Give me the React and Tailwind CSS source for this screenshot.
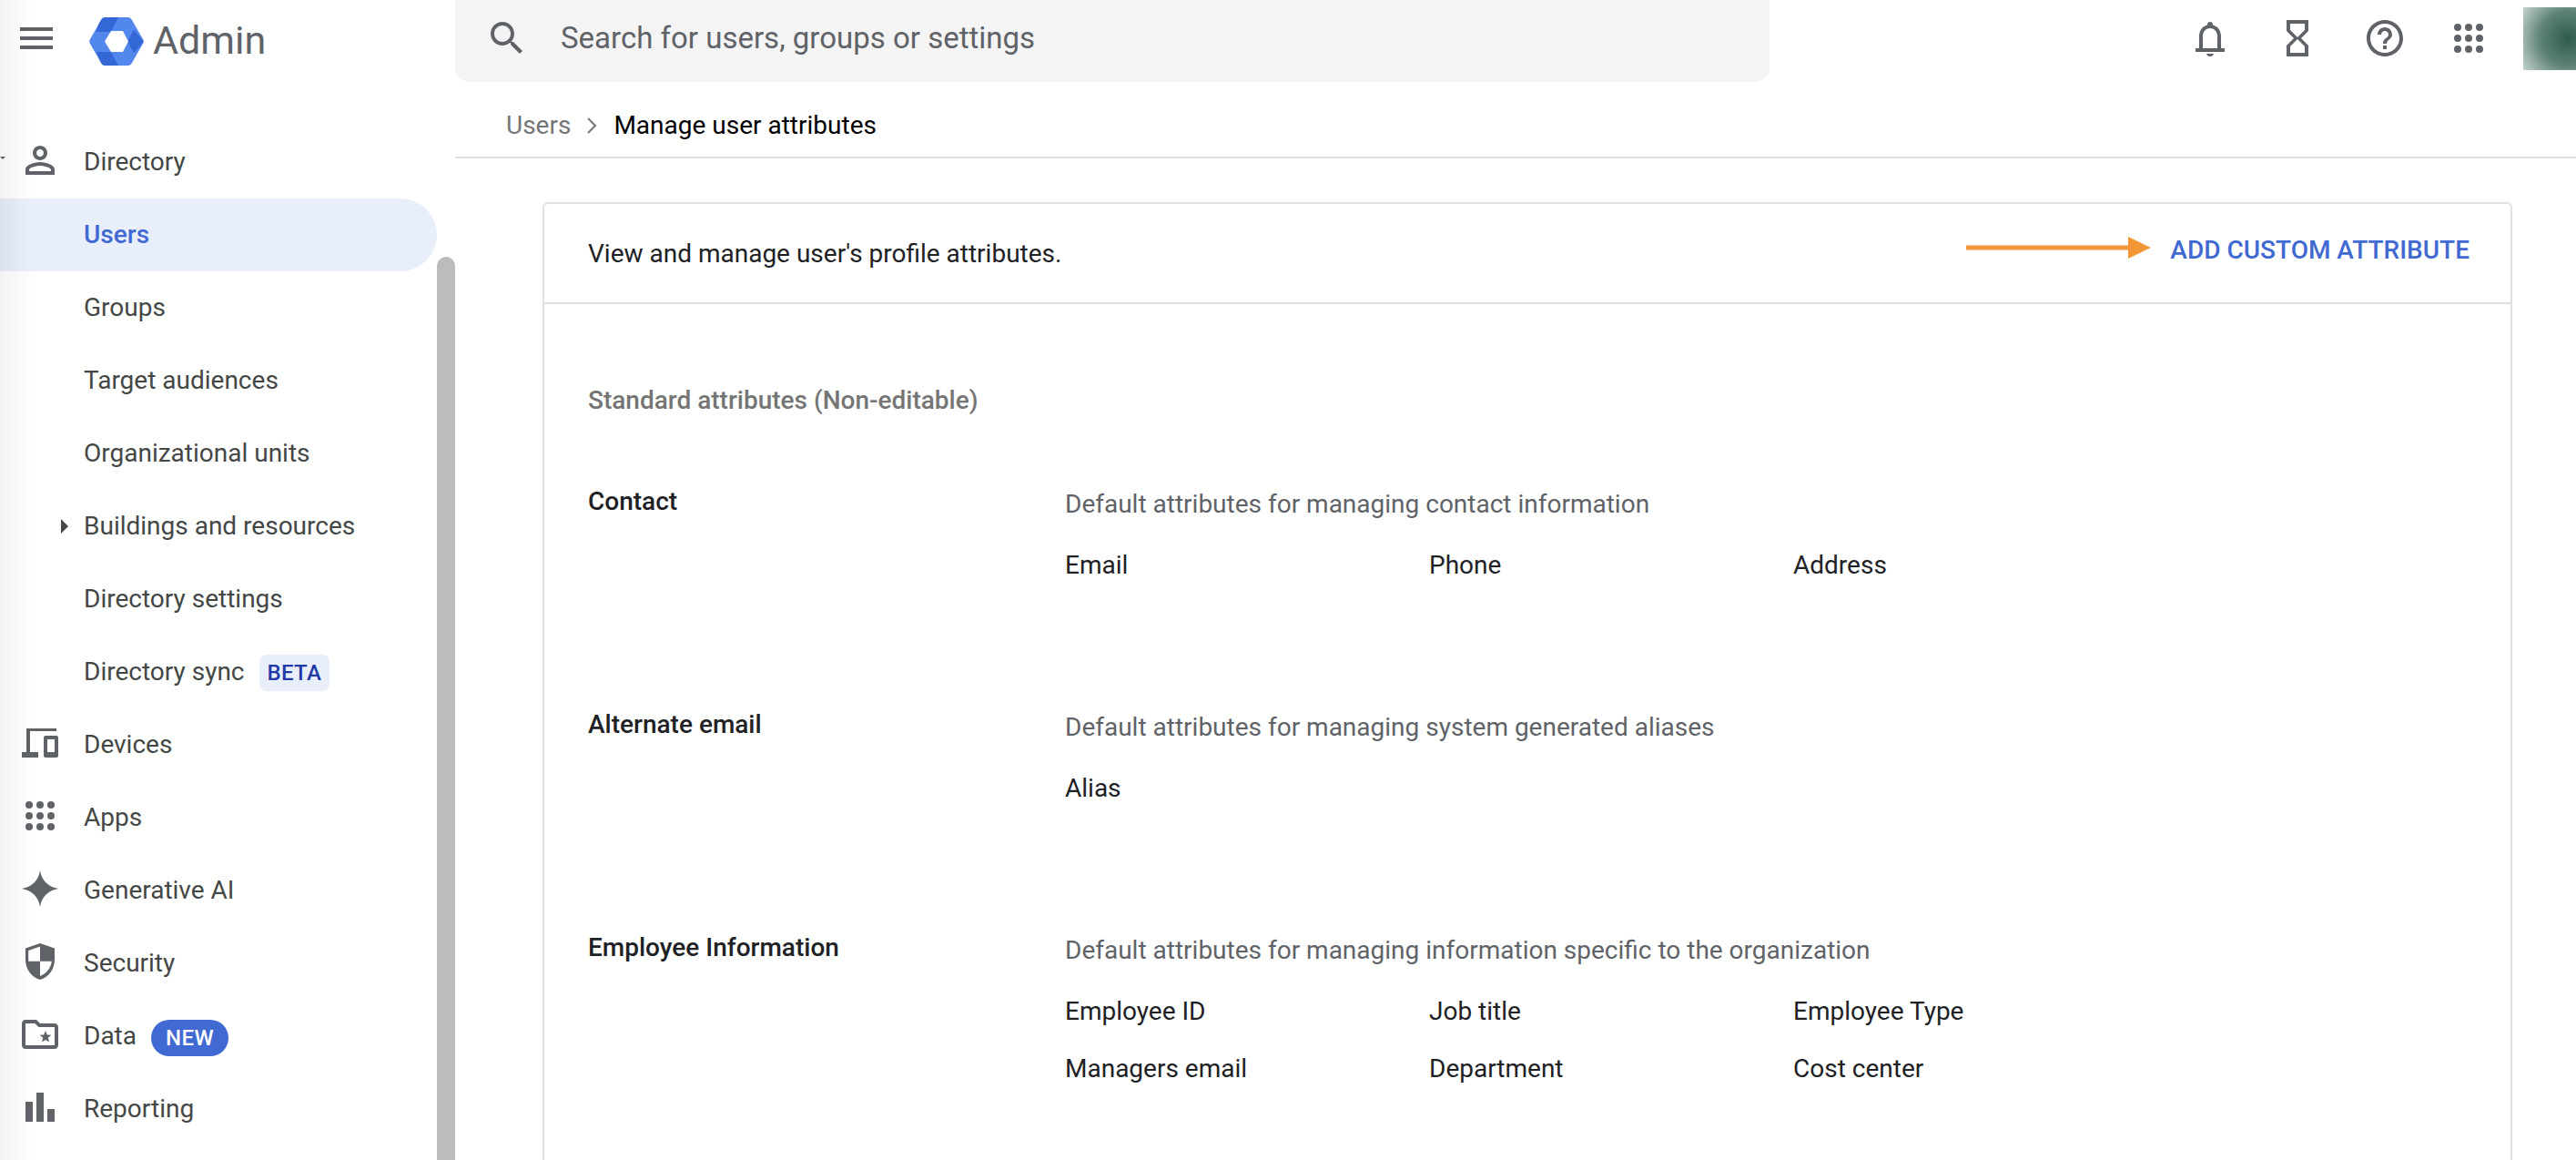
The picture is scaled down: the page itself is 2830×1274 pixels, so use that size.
/**
 * admin console - manage user attributes
 */

import React from 'react';

const Icon = ({ d, className = '', evenOdd }) => (
    <svg viewBox="0 0 24 24" className={`w-[48px] h-[48px] shrink-0 fill-[#5f6368] ${className}`}>
        <path d={d} fillRule={evenOdd ? 'evenodd' : undefined} />
    </svg>
);

const AppsIcon = ({ className = '' }) => (
    <svg viewBox="0 0 24 24" className={`w-[48px] h-[48px] shrink-0 fill-[#5f6368] ${className}`}>
        {[6, 12, 18].map((y) =>
            [6, 12, 18].map((x) => <circle key={`${x}-${y}`} cx={x} cy={y} r="2" />)
        )}
    </svg>
);

const ShieldIcon = () => (
    <svg viewBox="0 0 24 24" className="w-[48px] h-[48px] shrink-0 -mt-[4px]">
        <path className="fill-[#5f6368]" d="M12 2 4 4.8v6.3c0 5 3.4 9.7 8 10.9 4.6-1.2 8-5.9 8-10.9V4.8L12 2z" />
        <path className="fill-white" d="M5.6 11.9V6l6.4-2.2v8.1zM12 11.9h6.4c-.4 3.7-3 6.9-6.4 8.1z" />
    </svg>
);

const FolderIcon = () => (
    <svg viewBox="0 0 24 24" className="w-[48px] h-[48px] shrink-0 -mt-[4px] fill-[#5f6368]">
        <path d="M20 6h-8l-2-2H4c-1.1 0-2 .9-2 2v12c0 1.1.9 2 2 2h16c1.1 0 2-.9 2-2V8c0-1.1-.9-2-2-2zm0 12H4V6h5.2l2 2H20v10z" />
        <path d="m15 10 .9 2.2 2.3.2-1.8 1.5.6 2.3-2-1.2-2 1.2.6-2.3-1.8-1.5 2.3-.2z" />
    </svg>
);

const Logo = () => (
    <svg viewBox="0 0 60 53" className="w-[60px] h-[53px] shrink-0 mt-[7px]">
        <defs>
            <clipPath id="hex">
                <path d="M1 24 13 3c1-2 2.500-3 5-3h24c2.500 0 4 1 5 3l12 21c1 1.800 1 3.200 0 5L47 50c-1 2-2.500 3-5 3H18c-2.500 0-4-1-5-3L1 29c-1-1.800-1-3.200 0-5z" />
            </clipPath>
        </defs>
        <g clipPath="url(#hex)">
            <rect width="60" height="53" fill="#5287ee" />
            <polygon points="8,16 24,16 32,0 12,0" fill="#3367d6" />
            <polygon points="42,26.500 49,14 60,26.500 49,39" fill="#3367d6" />
            <polygon points="8,38 24,38 32,53 14,53" fill="#3367d6" />
            <polygon points="17,26.500 24,15 37,15 43,26.500 37,38 24,38" fill="#ffffff" />
        </g>
    </svg>
);

const paths = {
    menu: 'M3 18h18v-2H3v2zm0-5h18v-2H3v2zm0-7v2h18V6H3z',
    search: 'M15.5 14h-.79l-.28-.27C15.41 12.59 16 11.11 16 9.5 16 5.91 13.09 3 9.5 3S3 5.91 3 9.5 5.91 16 9.5 16c1.61 0 3.09-.59 4.23-1.57l.27.28v.79l5 4.99L20.49 19l-4.99-5zm-6 0C7.01 14 5 11.99 5 9.5S7.01 5 9.5 5 14 7.01 14 9.5 11.99 14 9.5 14z',
    bell: 'M12 22c1 0 1.800-.6 2-1.500h-4c.2.9 1 1.500 2 1.500zM20 17.500h-2V11c0-3-1.600-5.500-4.500-6.200V4.500a1.500 1.500 0 0 0-3 0v.3C7.600 5.500 6 8 6 11v6.500H4v2h16v-2zm-4 0H8V11c0-2.500 1.500-4.500 4-4.500s4 2 4 4.500v6.500z',
    hourglass: 'M6 2v6h.01L6 8.010 10 12l-4 4 .01.010H6V22h12v-5.990h-.01L18 16l-4-4 4-3.990-.01-.010H18V2H6zm10 14.500V20H8v-3.500l4-4 4 4zm-4-5l-4-4V4h8v3.500l-4 4z',
    help: 'M11 18h2v-2h-2v2zm1-16C6.480 2 2 6.480 2 12s4.480 10 10 10 10-4.480 10-10S17.520 2 12 2zm0 18c-4.410 0-8-3.590-8-8s3.590-8 8-8 8 3.590 8 8-3.590 8-8 8zm0-14c-2.210 0-4 1.790-4 4h2c0-1.100.9-2 2-2s2 .9 2 2c0 2-3 1.750-3 5h2c0-2.250 3-2.500 3-5 0-2.210-1.790-4-4-4z',
    person: 'M12 6c1.100 0 2 .9 2 2s-.9 2-2 2-2-.9-2-2 .9-2 2-2m0 9c2.700 0 5.800 1.290 6 2v1H6v-.99c.2-.72 3.300-2.010 6-2.010m0-11C9.790 4 8 5.790 8 8s1.790 4 4 4 4-1.790 4-4-1.790-4-4-4zm0 9c-2.670 0-8 1.340-8 4v3h16v-3c0-2.660-5.330-4-8-4z',
    devices: 'M4.500 4H21v1.500H6.500V17H11v3H2v-3h2.500zM15 8h6a1 1 0 0 1 1 1v10a1 1 0 0 1-1 1h-6a1 1 0 0 1-1-1V9a1 1 0 0 1 1-1zm1 2v7h4v-7z',
    spark: 'M12 2c.8 5.400 4.600 9.200 10 10-5.400.8-9.200 4.600-10 10-.8-5.400-4.600-9.200-10-10 5.400-.8 9.200-4.600 10-10z',
    bars: 'M4 9h4v11H4zM10 4h4v16h-4zM16 13h4v7h-4z',
};

const sidebarItems = [
    { label: 'Directory', icon: <Icon d={paths.person} className="-mt-[4px]" />, tip: true },
    { label: 'Users', active: true },
    { label: 'Groups' },
    { label: 'Target audiences' },
    { label: 'Organizational units' },
    { label: 'Buildings and resources', caret: true },
    { label: 'Directory settings' },
    { label: 'Directory sync', beta: true },
    { label: 'Devices', icon: <Icon d={paths.devices} className="-mt-[4px]" evenOdd /> },
    { label: 'Apps', icon: <AppsIcon className="-mt-[4px]" /> },
    { label: 'Generative AI', icon: <Icon d={paths.spark} className="-mt-[4px]" /> },
    { label: 'Security', icon: <ShieldIcon /> },
    { label: 'Data', icon: <FolderIcon />, isNew: true },
    { label: 'Reporting', icon: <Icon d={paths.bars} className="-mt-[4px]" /> },
];

const SidebarRow = ({ item }) => (
    <div
        className={`relative flex items-center h-[80px] shrink-0 ${
            item.active ? 'bg-[#e8effb] rounded-r-[40px] text-[#4169d2] font-medium' : 'text-[#444746]'
        }`}
    >
        {item.tip && (
            <div className="absolute left-0 top-[34px] w-0 h-0 border-x-[3px] border-x-transparent border-t-[3px] border-t-[#5f6368]" />
        )}
        <div className="w-[92px] shrink-0 flex justify-end items-center pr-[24px]">
            {item.icon}
            {item.caret && (
                <div className="-mr-[7px] w-0 h-0 border-y-[8px] border-y-transparent border-l-[8px] border-l-[#444746]" />
            )}
        </div>
        <span>{item.label}</span>
        {item.beta && (
            <span className="ml-[16px] mt-[2px] h-[40px] px-[9px] rounded-[8px] bg-[#e8effb] text-[#2239a8] text-[24px] font-medium tracking-[0.3px] flex items-center">
                BETA
            </span>
        )}
        {item.isNew && (
            <span className="ml-[16px] mt-[3px] h-[40px] px-[16px] rounded-full bg-[#4169d2] text-white text-[24px] font-medium tracking-[0.5px] flex items-center">
                NEW
            </span>
        )}
    </div>
);

const sections = [
    {
        title: 'Contact',
        desc: 'Default attributes for managing contact information',
        values: ['Email', 'Phone', 'Address'],
    },
    {
        title: 'Alternate email',
        desc: 'Default attributes for managing system generated aliases',
        values: ['Alias'],
    },
    {
        title: 'Employee Information',
        desc: 'Default attributes for managing information specific to the organization',
        values: ['Employee ID', 'Job title', 'Employee Type', 'Managers email', 'Department', 'Cost center'],
    },
];

export default function App() {
    return (
        <div className="relative w-[2830px] h-[1274px] overflow-hidden bg-white text-[28px] flex flex-col font-['Roboto',sans-serif]">
            {/* left edge shadow */}
            <div className="absolute left-0 top-0 bottom-0 w-[36px] z-10 bg-gradient-to-r from-black/5 to-transparent pointer-events-none" />

            {/* top bar */}
            <header className="h-[90px] shrink-0 flex">
                <div className="w-[500px] shrink-0 flex items-center pl-[16px] pb-[6px]">
                    <Icon d={paths.menu} />
                    <div className="ml-[34px] flex items-center">
                        <Logo />
                        <span className="ml-[10px] text-[43px] text-[#5f6368] mt-[4px]">Admin</span>
                    </div>
                </div>
                <div className="w-[1444px] shrink-0 bg-[#f4f4f4] rounded-b-[16px] flex items-center pl-[33px] pb-[6px]">
                    <Icon d={paths.search} />
                    <span className="ml-[35px] text-[33px] text-[#5f6368]">Search for users, groups or settings</span>
                </div>
                <div className="flex-1 flex justify-end">
                    <div className="flex items-center pb-[6px]">
                        <Icon d={paths.bell} />
                        <Icon d={paths.hourglass} className="ml-[48px]" />
                        <Icon d={paths.help} className="ml-[48px]" />
                        <AppsIcon className="ml-[44px]" />
                    </div>
                    <div className="ml-[36px] mt-[8px] w-[58px] h-[69px] bg-[radial-gradient(circle_at_85%_50%,#2f5b4f_0%,#5d8176_50%,#c5d3ce_100%)]" />
                </div>
            </header>

            <div className="flex-1 flex min-h-0">
                {/* sidebar */}
                <aside className="w-[500px] shrink-0 flex">
                    <nav className="w-[480px] shrink-0 pt-[48px] flex flex-col">
                        {sidebarItems.map((item) => (
                            <SidebarRow key={item.label} item={item} />
                        ))}
                    </nav>
                    <div className="w-[20px] mt-[192px] rounded-t-[10px] bg-[#bcbcbc]" />
                </aside>

                {/* content */}
                <main className="flex-1 min-w-0">
                    <div className="h-[84px] border-b-2 border-[#e0e0e0] pl-[56px] pt-[14px] flex items-center">
                        <span className="text-[#757575]">Users</span>
                        <svg viewBox="0 0 24 24" className="w-[24px] h-[24px] ml-[11px] mr-[12px] fill-none stroke-[#757575] stroke-2">
                            <path d="m8 4 8 8-8 8" />
                        </svg>
                        <span className="text-black">Manage user attributes</span>
                    </div>

                    <div className="ml-[96px] mr-[70px] mt-[48px] min-h-[1100px] border-2 border-[#e0e0e0] rounded-t-[6px]">
                        <div className="h-[110px] border-b-2 border-[#e0e0e0] pl-[48px] pr-[45px] flex items-center justify-between">
                            <span className="mt-[1px] text-[#202124]">View and manage user's profile attributes.</span>
                            <div className="flex items-center -mt-[7px]">
                                <svg viewBox="0 0 203 24" className="w-[203px] h-[24px] -mt-[6px]">
                                    <rect x="0" y="9.500" width="180" height="5" fill="#f29837" />
                                    <polygon points="178,0 203,12 178,24" fill="#f29837" />
                                </svg>
                                <span className="ml-[21px] text-[#4169d2] font-medium">ADD CUSTOM ATTRIBUTE</span>
                            </div>
                        </div>

                        <div className="px-[48px] pt-[86px]">
                            <div className="leading-[40px] font-medium text-[#757575] mb-[71px]">Standard attributes (Non-editable)</div>
                            {sections.map((s) => (
                                <div key={s.title} className="flex min-h-[245px]">
                                    <div className="w-[524px] shrink-0 leading-[40px] font-medium text-[#202124]">{s.title}</div>
                                    <div className="pt-[3px]">
                                        <div className="leading-[40px] text-[#5f6368]">{s.desc}</div>
                                        <div className="mt-[27px] grid grid-cols-[400px_400px_400px] gap-y-[23px] leading-[40px] text-[#202124]">
                                            {s.values.map((v) => (
                                                <div key={v}>{v}</div>
                                            ))}
                                        </div>
                                    </div>
                                </div>
                            ))}
                        </div>
                    </div>
                </main>
            </div>
        </div>
    );
}
